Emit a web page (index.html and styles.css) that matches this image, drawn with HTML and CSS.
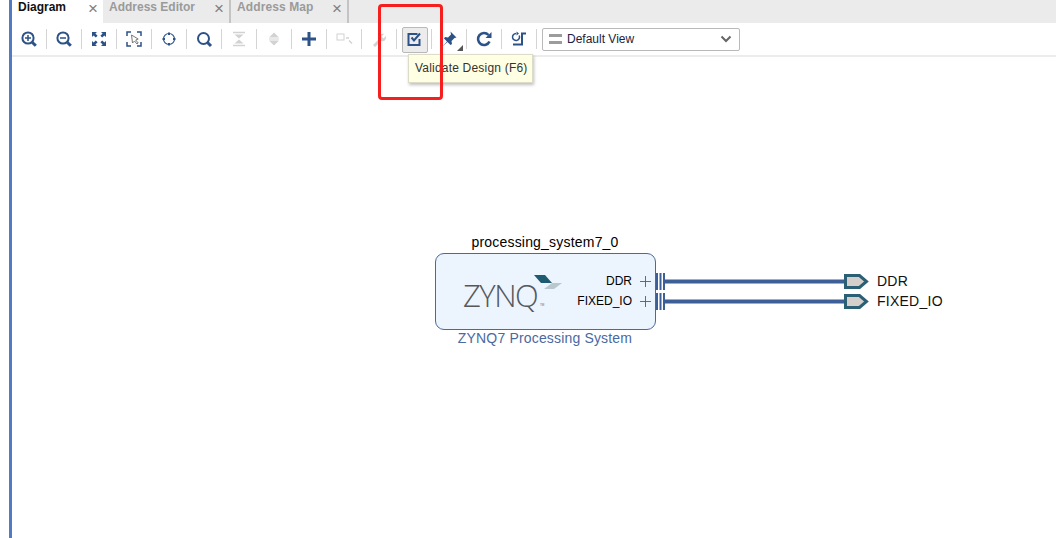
FILE: index.html
```html
<!DOCTYPE html>
<html lang="en">
<head>
<meta charset="utf-8">
<title>Block Design</title>
<link rel="stylesheet" href="styles.css">
</head>
<body>
<div class="page">
  <main class="panel">
    <nav class="tabs">
      <div class="tab tab-active"><span>Diagram</span><span class="close">&#215;</span></div>
      <div class="tab tab-second"><span>Address Editor</span><span class="close">&#215;</span></div>
      <div class="tab tab-third"><span>Address Map</span><span class="close">&#215;</span></div>
    </nav>
    <div class="toolbar">
      <button class="tool"><svg class="ico" viewBox="0 0 20 20"><circle cx="9" cy="9" r="5.6" class="s2"/><path d="M9 6v6M6 9h6" class="s15"/><path d="M13.2 13.2l3.6 3.6" class="s3"/></svg></button>
      <button class="tool"><svg class="ico" viewBox="0 0 20 20"><circle cx="9" cy="9" r="5.6" class="s2"/><path d="M6 9h6" class="s15"/><path d="M13.2 13.2l3.6 3.6" class="s3"/></svg></button>
      <button class="tool"><svg class="ico" viewBox="0 0 20 20"><path d="M3 3h5L6.400 4.600 8.600 6.800 6.800 8.600 4.600 6.400 3 8zM17 3v5l-1.600-1.600-2.200 2.200-1.800-1.800 2.200-2.200L12 3zM3 17v-5l1.600 1.600 2.200-2.200 1.800 1.800-2.200 2.200L8 17zM17 17h-5l1.600-1.600-2.200-2.200 1.800-1.800 2.200 2.200L17 12z" class="f"/></svg></button>
      <button class="tool"><svg class="ico" viewBox="0 0 20 20"><path d="M3 7V3h4M13 3h4v4M17 13v4h-4M7 17H3v-4" class="s15"/><path d="M7.500 6l1 8 2-2 2.500 3 1.200-1-2.500-3 2.500-1z" class="cursor"/></svg></button>
      <button class="tool"><svg class="ico" viewBox="0 0 20 20"><circle cx="10" cy="10" r="5.500" class="s12"/><path d="M10 3.500v2.500M10 14v2.500M3.500 10H6M14 10h2.500" class="s2"/></svg></button>
      <button class="tool"><svg class="ico" viewBox="0 0 20 20"><circle cx="9.500" cy="9.500" r="5.500" class="s2"/><path d="M13.500 13.500l3.500 3.500" class="s3"/></svg></button>
      <button class="tool"><svg class="ico" viewBox="0 0 20 20"><path d="M4 3.500h12M4 16.500h12" class="g15"/><path d="M5.500 5.500h9L10 9.500zM5.500 14.500h9L10 10.500z" class="gf"/></svg></button>
      <button class="tool"><svg class="ico" viewBox="0 0 20 20"><path d="M10 3.500l5 5H5zM10 16.500l5-5H5z" class="gf"/><path d="M5 10h10" class="g1"/></svg></button>
      <button class="tool"><svg class="ico" viewBox="0 0 20 20"><path d="M10 3v14M3 10h14" class="s3"/></svg></button>
      <button class="tool"><svg class="ico" viewBox="0 0 20 20"><rect x="3" y="5" width="7" height="6" class="gbox"/><path d="M12 9h3M15 11.500l3 3" class="g15"/></svg></button>
      <button class="tool"><svg class="ico" viewBox="0 0 20 20"><path d="M4 16l6-6c-1-3 1-6 5-5l-2.500 2.500 2 2L17 7c.5 4-2 6-5 5l-6 6z" class="gf"/></svg></button>
      <button class="tool tool-on"><svg class="ico" viewBox="0 0 20 20"><path d="M15.500 10v6h-11V5h9" class="s2"/><path d="M7.500 8.500l2.500 3 6-7" class="s2"/></svg></button>
      <button class="tool tool-corner"><svg class="ico" viewBox="0 0 20 20"><path d="M11.500 2.500l6 6-2 .5-3 3 .5 3-1.500 1-3-3-5 4.500 4.500-5-3-3 1-1.500 3 .5 3-3z" class="f"/></svg></button>
      <button class="tool"><svg class="ico" viewBox="0 0 20 20"><path d="M15.500 12.500A6 6 0 1 1 14.500 6" class="s25"/><path d="M17.500 3v6h-6z" class="f"/></svg></button>
      <button class="tool"><svg class="ico" viewBox="0 0 20 20"><path d="M7 4.500a3.500 3.500 0 1 0 3.200 2" class="s15"/><path d="M7.500 2.500v4l2.500-2z" class="f"/><path d="M17 4.500h-4V15.500H4" class="s2"/></svg></button>
      <div class="view-select">
        <span class="view-bars"></span>
        <span class="view-label">Default View</span>
        <svg class="chev" viewBox="0 0 12 8"><path d="M1.500 1.500L6 6l4.500-4.500" class="chev-line"/></svg>
      </div>
    </div>
    <div class="rule"></div>
    <section class="canvas">
      <svg class="wires" viewBox="0 0 1056 538">
        <g class="bus">
          <path d="M657 273v17M660.500 273v17M664 273v17M657 293v17M660.500 293v17M664 293v17"/>
        </g>
        <path d="M664 281.500H845M664 301.500H845" class="wire"/>
        <path d="M845.500 275.500h14l7 6-7 6h-14z" class="port"/>
        <path d="M845.500 295.500h14l7 6-7 6h-14z" class="port"/>
      </svg>
      <div class="block-title">processing_system7_0</div>
      <div class="block">
        <div class="logo">
          <span class="logo-word">ZYNQ</span><span class="logo-tm">TM</span>
          <svg class="logo-mark" viewBox="0 0 32 16"><path d="M2 0h11l7 8H9z" class="mark-dark"/><path d="M12 14l8-6h10l-8 6z" class="mark-light"/></svg>
        </div>
        <div class="pins">
          <div class="pin"><span>DDR</span><svg class="pin-plus" viewBox="0 0 12 12"><path d="M6 0v12M0 6h12"/></svg></div>
          <div class="pin"><span>FIXED_IO</span><svg class="pin-plus" viewBox="0 0 12 12"><path d="M6 0v12M0 6h12"/></svg></div>
        </div>
      </div>
      <div class="block-sub">ZYNQ7 Processing System</div>
      <div class="ext ext-ddr">DDR</div>
      <div class="ext ext-io">FIXED_IO</div>
    </section>
  </main>
</div>
<div class="tooltip">Validate Design (F6)</div>
<div class="callout"></div>
</body>
</html>
```
FILE: styles.css
```css
* { box-sizing: border-box; }
html, body { margin: 0; height: 100%; overflow: hidden; background: #fff; }
body { font-family: "Liberation Sans", Arial, sans-serif; position: relative; }

.page { height: 538px; padding-left: 9px; display: flex; }
.panel { flex: 1; display: flex; flex-direction: column; border-left: 3px solid #4f7cc4; min-width: 0; }

.tabs { height: 23px; display: flex; background: #ebebeb; flex: none; }
.tab { height: 23px; display: flex; align-items: flex-start; font-size: 12px; font-weight: bold; line-height: 14px; color: #9a9a9a; }
.tab-active { width: 91px; background: #fff; color: #111; padding-left: 6px; }
.tab-second { width: 128px; padding-left: 6px; border-right: 2px solid #c4c4c4; }
.tab-third { width: 118px; padding-left: 6px; border-right: 2px solid #c4c4c4; letter-spacing: .1px; }
.close { margin-left: auto; margin-right: 5px; margin-top: 1px; font-size: 17px; line-height: 16px; font-weight: normal; color: #808080; }

.toolbar { height: 32px; display: flex; align-items: center; flex: none; }
.tool { width: 34px; height: 24px; padding: 0; border: 0; background: none; display: flex; align-items: center; justify-content: center; margin-right: 1px; position: relative; }
.tool::after { content: ""; position: absolute; right: -1px; top: 2px; height: 20px; width: 1px; background: #d4d4d4; }
.tool-on::before { content: ""; position: absolute; left: 5px; top: 0; width: 24px; height: 24px; background: #ececec; border: 1px solid #b9b9b9; border-radius: 2px; }
.tool-corner::before { content: ""; position: absolute; right: 3px; bottom: 0; border-style: solid; border-width: 0 0 6px 6px; border-color: transparent transparent #555 transparent; }
.ico { width: 20px; height: 20px; display: block; position: relative; fill: none; stroke-linecap: butt; }
.s12, .s15, .s2, .s25, .s3 { stroke: #2d5288; fill: none; }
.s12 { stroke-width: 1.2; }
.s15 { stroke-width: 1.5; }
.s2 { stroke-width: 2; }
.s25 { stroke-width: 2.6; }
.s3 { stroke-width: 3; }
.f { fill: #2d5288; stroke: none; }
.cursor { fill: #fff; stroke: #777; stroke-width: 1; }
.g1 { stroke: #d2d2d2; stroke-width: 1; fill: none; }
.g15 { stroke: #d2d2d2; stroke-width: 1.500; fill: none; }
.gf { fill: #d2d2d2; stroke: none; }
.gbox { fill: #fff; stroke: #d2d2d2; stroke-width: 1; }

.view-select { width: 198px; height: 23px; margin-left: 5px; border: 1px solid #b9b9b9; border-radius: 2px; display: flex; align-items: center; padding: 0 7px 0 6px; background: #fff; }
.view-bars { width: 13px; height: 10px; border-top: 3px solid #9c9c9c; border-bottom: 3px solid #9c9c9c; flex: none; }
.view-label { margin-left: 5px; font-size: 12px; color: #1c2340; flex: 1; }
.chev { width: 12px; height: 8px; }
.chev-line { stroke: #666; stroke-width: 2; fill: none; }

.rule { height: 2px; background: #ececec; flex: none; }
.canvas { flex: 1; position: relative; background: #fff; }

/* Diagram nodes sit on a free canvas: coordinates relative to the canvas (origin 12,57) */
.wires { position: absolute; left: -12px; top: -57px; width: 1056px; height: 538px; }
.bus path { stroke: #3b5f96; stroke-width: 2; fill: none; }
.wire { stroke: #3b5f96; stroke-width: 4; fill: none; }
.port { fill: #d5cfcc; stroke: #2b5f73; stroke-width: 3; }

.block-title { position: absolute; left: 423px; top: 177px; width: 220px; text-align: center; font-size: 14px; line-height: 16px; color: #000; letter-spacing: .2px; }
.block { position: absolute; left: 423px; top: 196px; width: 221px; height: 77px; background: #ecf4fd; border: 1px solid #4a6a9e; border-radius: 9px; display: flex; }
.block-sub { position: absolute; left: 423px; top: 273px; width: 220px; text-align: center; font-size: 14px; line-height: 16px; color: #4a69a1; letter-spacing: .17px; }

.logo { position: absolute; left: 27px; top: 25px; width: 105px; height: 30px; }
.logo-word { position: absolute; left: 0; top: 0; font-family: "Open Sans", "Liberation Sans", sans-serif; font-weight: 300; font-size: 31px; line-height: 32px; letter-spacing: -1.5px; color: #55585b; }
.logo-tm { position: absolute; left: 77px; top: 24px; font-size: 3px; line-height: 4px; color: #6a6d70; }
.logo-mark { position: absolute; left: 69px; top: -4px; width: 32px; height: 16px; }
.mark-dark { fill: #1f5b70; }
.mark-light { fill: #b9c8cd; }

.pins { position: absolute; right: 4px; top: 20px; display: flex; flex-direction: column; gap: 6px; }
.pin { display: flex; align-items: center; justify-content: flex-end; height: 14px; font-size: 12px; color: #000; gap: 8px; }
.pin-plus { width: 11px; height: 11px; }
.pin-plus path { stroke: #44628f; stroke-width: 1; fill: none; }

.ext { position: absolute; left: 865px; font-size: 14px; line-height: 16px; color: #111; letter-spacing: .25px; }
.ext-ddr { top: 216px; }
.ext-io { top: 236px; }

.tooltip { position: absolute; left: 408px; top: 54px; width: 125px; height: 29px; background: #ffffe3; border: 1px solid #dcdcc8; box-shadow: 1px 2px 3px rgba(0,0,0,.25); font-size: 12px; line-height: 27px; padding-left: 6px; color: #333; letter-spacing: .2px; white-space: nowrap; }
.callout { position: absolute; left: 378px; top: 4px; width: 65px; height: 96px; border: 3px solid #f5201e; border-radius: 4px; }
```
